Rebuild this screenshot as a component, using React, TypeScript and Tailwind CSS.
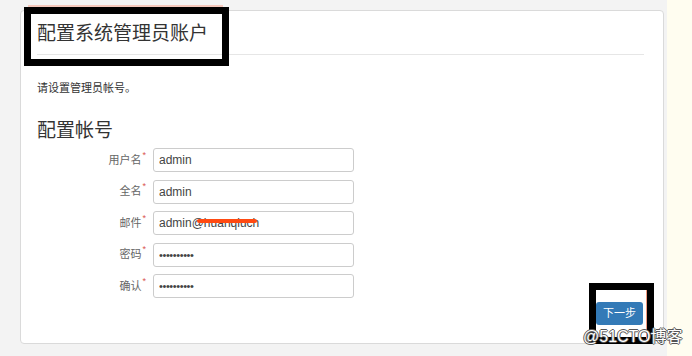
const fields = [
  { label: '用户名', value: 'admin', secret: false },
  { label: '全名', value: 'admin', secret: false },
  { label: '邮件', value: 'admin@huanqiuch', secret: false },
  { label: '密码', value: '••••••••••', secret: true },
  { label: '确认', value: '••••••••••', secret: true },
];

export default function App() {
  return (
    <div className="relative flex h-[356px] w-[692px] overflow-hidden bg-[#f3f3f3] font-['Liberation_Sans','Noto_Sans_CJK_SC',sans-serif]">
      <div className="w-[667px] pl-[20px] pt-[10px]">
        <div className="flex h-[334px] w-[644px] flex-col rounded-[4px] border border-[#dadada] bg-white px-[16px]">
          <div className="mr-[3px] border-b border-[#e6e6e6] pb-[6px] pt-[9px] text-[19px] leading-[28px] text-[#333]">
            配置系统管理员账户
          </div>
          <p className="mt-[25px] text-[11px] leading-[16px] text-[#333]">请设置管理员帐号。</p>
          <h2 className="mt-[22px] text-[19px] leading-[26px] text-[#333]">配置帐号</h2>
          <div className="mt-[4px] flex flex-col gap-[7.5px]">
            {fields.map((f) => (
              <div key={f.label} className="flex h-[24px] items-center">
                <div className="flex w-[110px] items-center justify-end pr-[1px] text-[11px] text-[#666]">
                  <span>{f.label}</span>
                  <span className="relative -top-[5px] ml-[1px] text-[9px] leading-none text-[#d9534f]">*</span>
                </div>
                <input
                  readOnly
                  value={f.value}
                  className={`ml-[6px] h-[24px] w-[201px] rounded-[3px] border border-[#cccccc] px-[5px] text-[#444] outline-none ${
                    f.secret ? 'text-[11px] tracking-[-0.4px]' : 'text-[12px]'
                  }`}
                />
              </div>
            ))}
          </div>
          <div className="mr-[4px] mt-[4px] flex justify-end">
            <button className="h-[23px] w-[47px] rounded-[3px] bg-[#337ab7] text-[11px] text-white">下一步</button>
          </div>
        </div>
      </div>
      <div className="flex-1 bg-[#fffdf0]" />

      {/* annotations */}
      <div className="absolute left-[28px] top-[5px] h-[2px] w-[195px] bg-[#f6c9bd]" />
      <div className="absolute left-[24px] top-[7px] h-[59px] w-[205px] border-[7px] border-black" />
      <div className="absolute left-[197px] top-[219px] h-[4px] w-[60px] rounded-full bg-[#ff4a12]" />
      <div className="absolute left-[589px] top-[283px] h-[61px] w-[65px] border-[7px] border-black" />
      <div className="absolute left-[646px] top-[290px] h-[50px] w-[1px] bg-[#f19a80]" />
      <div className="absolute left-[583px] top-[328px] text-[16px] leading-[18px] text-white [text-shadow:-1px_0_#555,1px_0_#555,0_-1px_#555,0_1px_#555]">
        @51CTO博客
      </div>
    </div>
  );
}
